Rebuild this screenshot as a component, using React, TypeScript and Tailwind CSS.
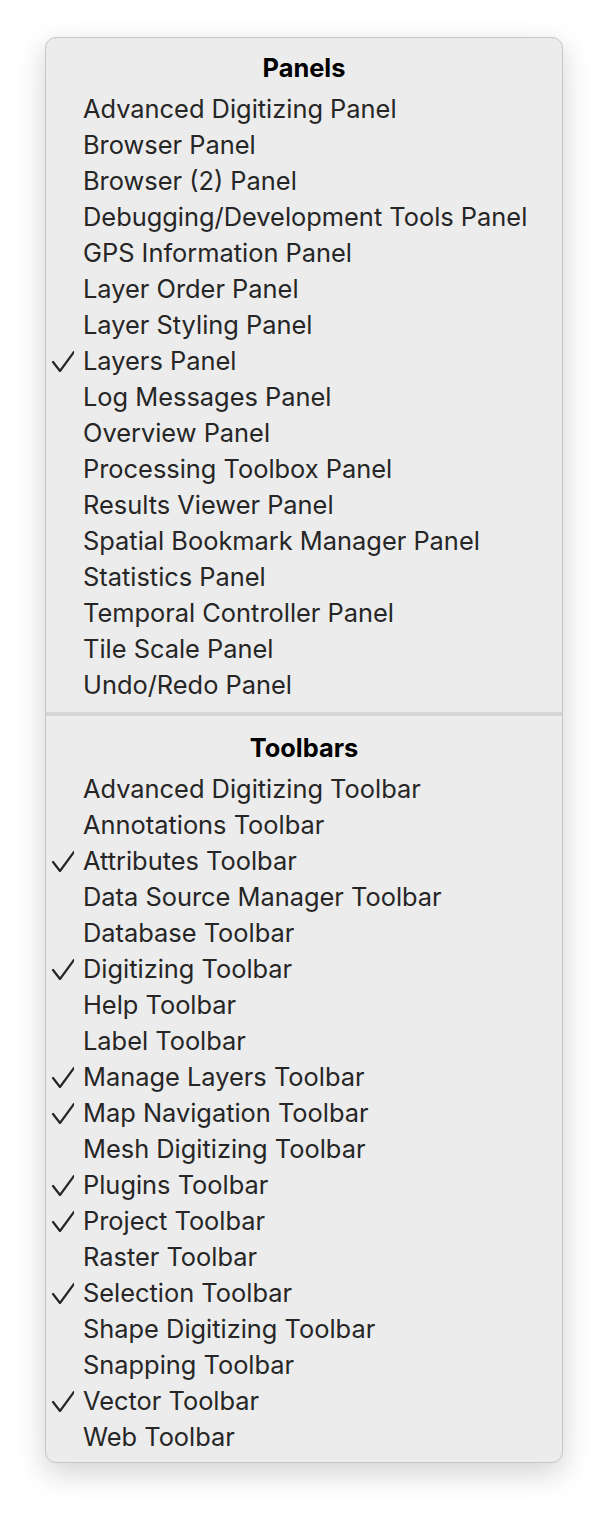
import React from "react";

const panels: [string, boolean][] = [
  ["Advanced Digitizing Panel", false],
  ["Browser Panel", false],
  ["Browser (2) Panel", false],
  ["Debugging/Development Tools Panel", false],
  ["GPS Information Panel", false],
  ["Layer Order Panel", false],
  ["Layer Styling Panel", false],
  ["Layers Panel", true],
  ["Log Messages Panel", false],
  ["Overview Panel", false],
  ["Processing Toolbox Panel", false],
  ["Results Viewer Panel", false],
  ["Spatial Bookmark Manager Panel", false],
  ["Statistics Panel", false],
  ["Temporal Controller Panel", false],
  ["Tile Scale Panel", false],
  ["Undo/Redo Panel", false],
];

const toolbars: [string, boolean][] = [
  ["Advanced Digitizing Toolbar", false],
  ["Annotations Toolbar", false],
  ["Attributes Toolbar", true],
  ["Data Source Manager Toolbar", false],
  ["Database Toolbar", false],
  ["Digitizing Toolbar", true],
  ["Help Toolbar", false],
  ["Label Toolbar", false],
  ["Manage Layers Toolbar", true],
  ["Map Navigation Toolbar", true],
  ["Mesh Digitizing Toolbar", false],
  ["Plugins Toolbar", true],
  ["Project Toolbar", true],
  ["Raster Toolbar", false],
  ["Selection Toolbar", true],
  ["Shape Digitizing Toolbar", false],
  ["Snapping Toolbar", false],
  ["Vector Toolbar", true],
  ["Web Toolbar", false],
];

function Check() {
  return (
    <svg width="24" height="24" viewBox="0 0 24 24" className="absolute left-[4px] top-[6px]">
      <path d="M3 13 L10 22 L24 3" fill="none" stroke="#262626" strokeWidth="2.2" strokeLinecap="round" strokeLinejoin="round" />
    </svg>
  );
}

function Item({ label, checked }: { label: string; checked: boolean }) {
  return (
    <div className="relative h-[36px] flex items-center pl-[37px] text-[25.4px] text-[#262626] leading-none">
      {checked && <Check />}
      <span>{label}</span>
    </div>
  );
}

function Title({ children }: { children: React.ReactNode }) {
  return (
    <div className="h-[36px] flex items-center justify-center text-[25.4px] font-bold text-black leading-none">
      {children}
    </div>
  );
}

export default function App() {
  return (
    <div className="w-[608px] h-[1516px] bg-white pt-[37px] pl-[45px]" style={{ fontFamily: "Inter, 'Noto Sans', sans-serif" }}>
      <div className="w-[518px] rounded-[11px] border border-[#c6c6c6] bg-[#ececec] shadow-[0_10px_30px_rgba(0,0,0,0.18)] pt-[12px] pb-[7px]">
        <Title>Panels</Title>
        <div className="mt-[5px]">
          {panels.map(([l, c]) => (
            <Item key={l} label={l} checked={c} />
          ))}
        </div>
        <div className="mt-[9px] h-[4px] bg-[#d6d6d6]" />
        <div className="mt-[14px]">
          <Title>Toolbars</Title>
        </div>
        <div className="mt-[5px]">
          {toolbars.map(([l, c]) => (
            <Item key={l} label={l} checked={c} />
          ))}
        </div>
      </div>
    </div>
  );
}
